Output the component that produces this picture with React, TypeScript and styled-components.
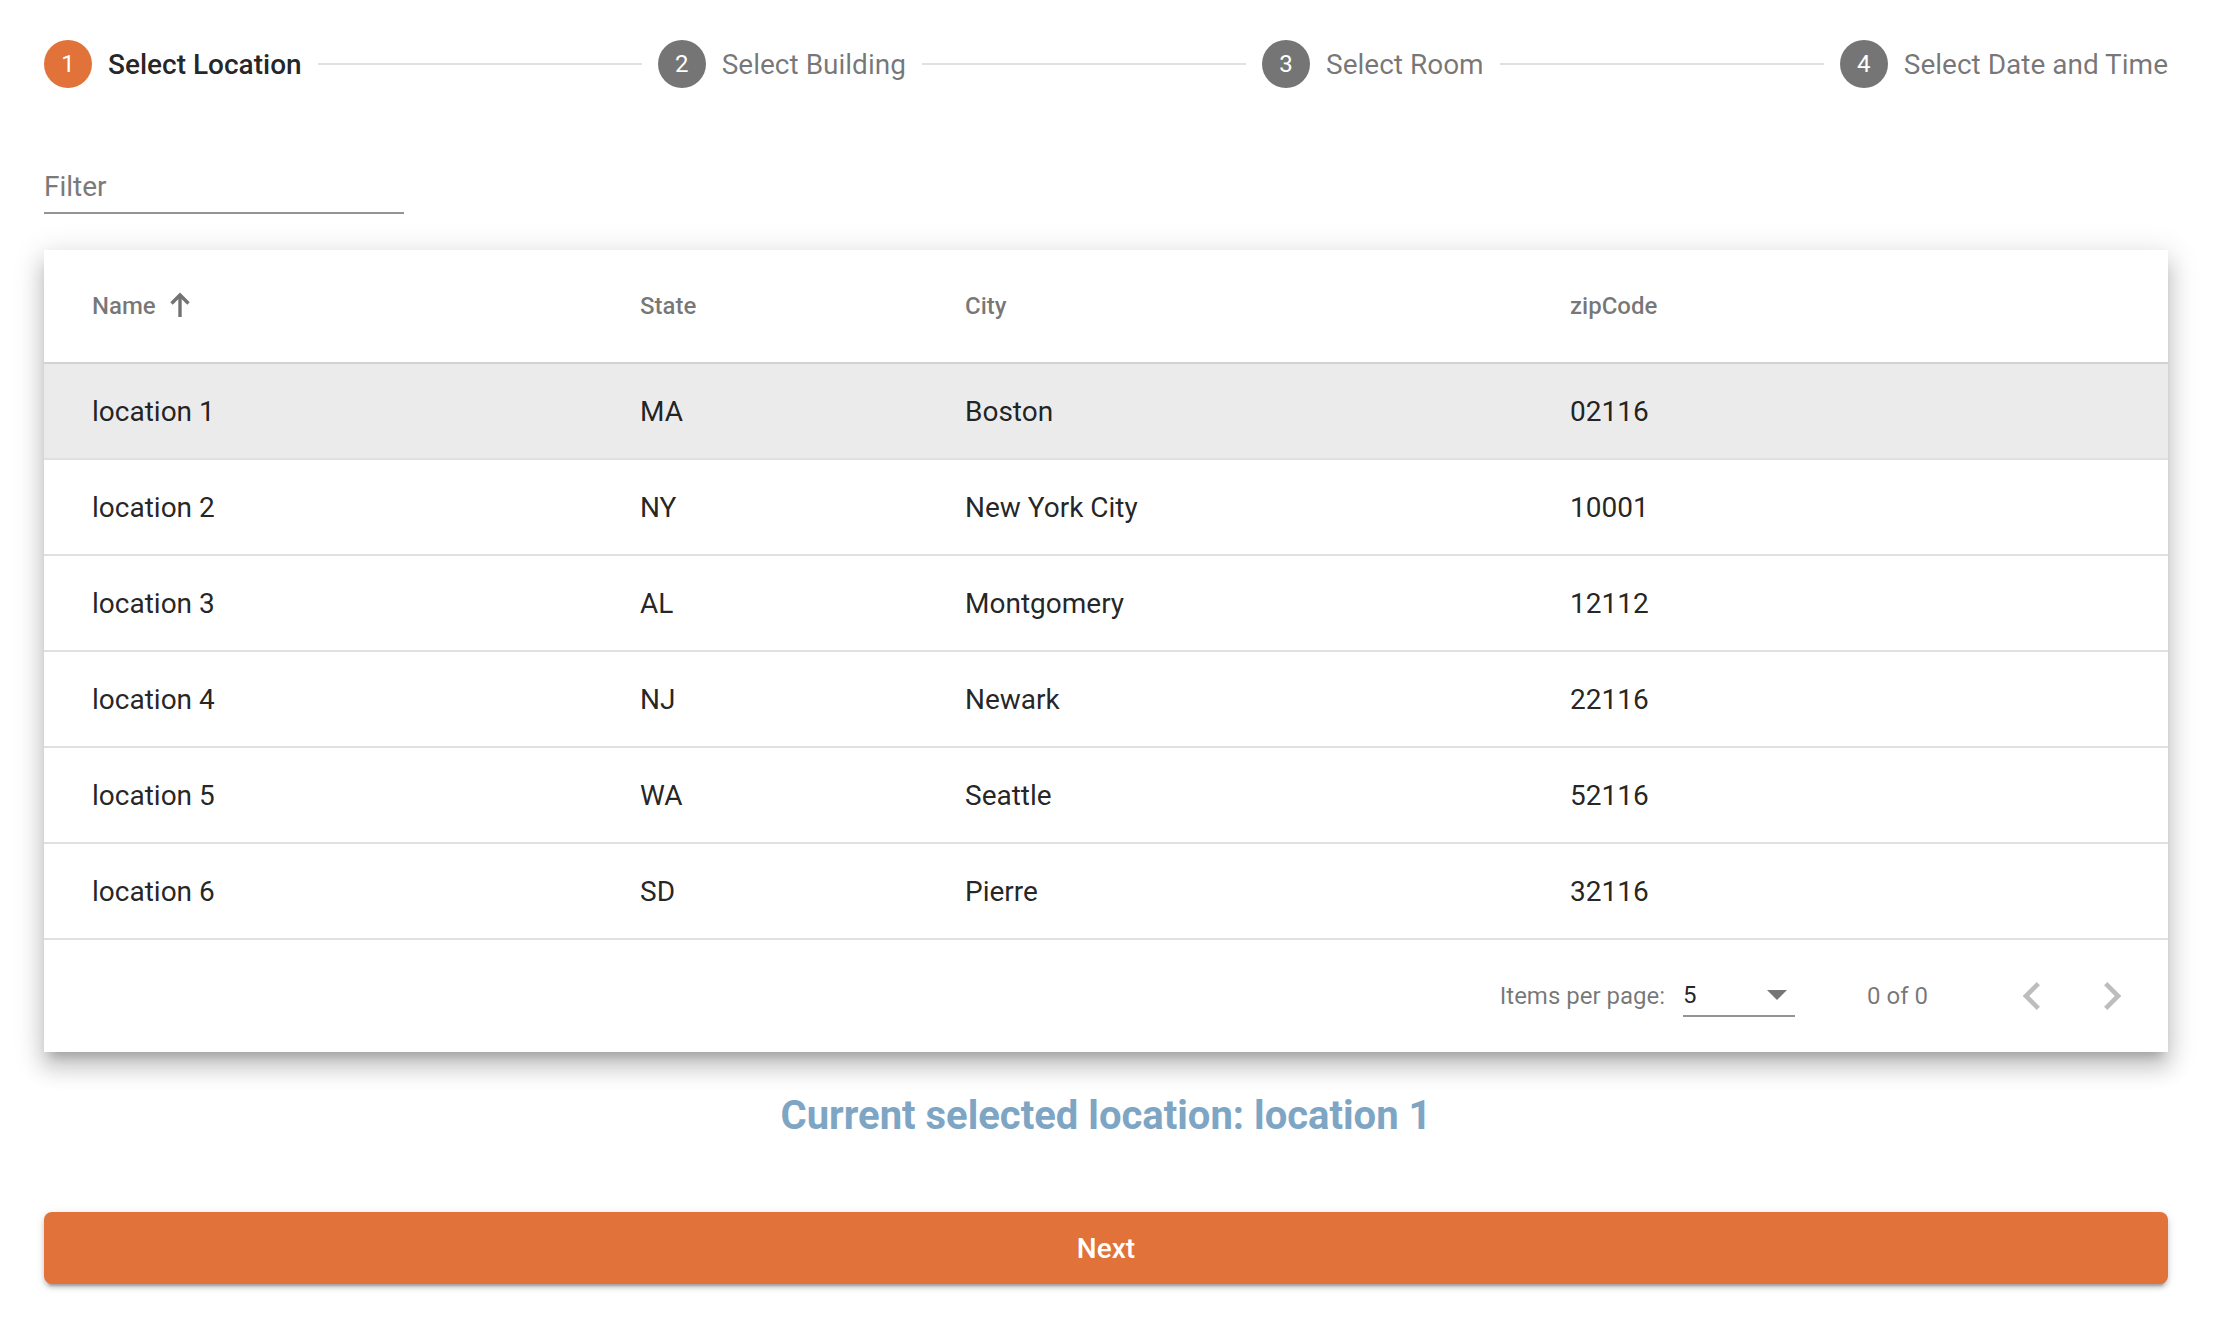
import * as React from 'react';
import styled, { createGlobalStyle } from 'styled-components';

const GlobalStyle = createGlobalStyle`
	body {
		margin: 0;
		background: #ffffff;
		font-family: Roboto, "Noto Sans", "Liberation Sans", sans-serif;
	}
`;

const Page = styled.div`
	padding: 40px 58px 40px 44px;
	display: flex;
	flex-direction: column;
`;

const Stepper = styled.div`
	display: flex;
	align-items: center;
	height: 48px;
`;

const Step = styled.div`
	display: flex;
	align-items: center;
	gap: 16px;
`;

const StepIcon = styled.div<{ $active?: boolean }>`
	width: 48px;
	height: 48px;
	border-radius: 50%;
	background: ${(p) => (p.$active ? '#e0723a' : '#757575')};
	color: #fff;
	font-size: 24px;
	display: flex;
	align-items: center;
	justify-content: center;
`;

const StepLabel = styled.span<{ $active?: boolean }>`
	font-size: 28px;
	font-weight: ${(p) => (p.$active ? 500 : 400)};
	color: ${(p) => (p.$active ? 'rgba(0, 0, 0, 0.87)' : 'rgba(0, 0, 0, 0.54)')};
	white-space: nowrap;
`;

const Connector = styled.div`
	flex: 1;
	height: 2px;
	margin: 0 16px;
	background: #e0e0e0;
`;

const FilterField = styled.div`
	margin-top: 78px;
	width: 360px;
	border-bottom: 2px solid #949494;
	height: 40px;
	padding-bottom: 6px;
	display: flex;
	align-items: center;
`;

const FilterInput = styled.input`
	border: none;
	outline: none;
	padding: 0;
	width: 100%;
	font-family: inherit;
	font-size: 28px;
	color: rgba(0, 0, 0, 0.87);
	background: transparent;

	&::placeholder {
		color: #7a7a7a;
	}
`;

const Card = styled.div`
	margin-top: 36px;
	background: #fff;
	box-shadow: 0 10px 10px -6px rgba(0, 0, 0, 0.2), 0 16px 20px 2px rgba(0, 0, 0, 0.14),
		0 6px 28px 4px rgba(0, 0, 0, 0.12);
`;

const Row = styled.div<{ $header?: boolean; $selected?: boolean }>`
	display: grid;
	grid-template-columns: 548px 325px 605px 1fr;
	align-items: center;
	padding: 0 48px;
	height: ${(p) => (p.$header ? '112px' : '94px')};
	border-bottom: 2px solid ${(p) => (p.$header ? '#d2d2d2' : '#e0e0e0')};
	background: ${(p) => (p.$selected ? '#ebebeb' : '#fff')};
`;

const HeadCell = styled.div`
	display: flex;
	align-items: center;
	gap: 10px;
	font-size: 24px;
	font-weight: 500;
	color: rgba(0, 0, 0, 0.54);
`;

const SortArrow = styled.svg`
	width: 28px;
	height: 28px;
	color: #737373;
	margin-top: -2px;
`;

const Cell = styled.div`
	font-size: 28px;
	color: rgba(0, 0, 0, 0.87);
`;

const Paginator = styled.div`
	display: flex;
	align-items: center;
	justify-content: flex-end;
	height: 112px;
	padding-right: 16px;
	font-size: 24px;
	color: rgba(0, 0, 0, 0.54);
`;

const PageSelect = styled.div`
	margin-left: 18px;
	width: 112px;
	height: 42px;
	box-sizing: border-box;
	border-bottom: 2px solid #949494;
	display: flex;
	align-items: center;
	justify-content: space-between;
	padding-right: 8px;
	color: rgba(0, 0, 0, 0.87);
`;

const Caret = styled.span`
	width: 0;
	height: 0;
	border-left: 10px solid transparent;
	border-right: 10px solid transparent;
	border-top: 10px solid rgba(0, 0, 0, 0.54);
`;

const RangeLabel = styled.span`
	margin: 0 64px 0 72px;
`;

const IconButton = styled.button`
	width: 80px;
	height: 80px;
	border: none;
	background: none;
	padding: 0;
	display: flex;
	align-items: center;
	justify-content: center;
	color: rgba(0, 0, 0, 0.26);
`;

const Summary = styled.h3`
	margin: 40px 0 0;
	line-height: 48px;
	text-align: center;
	font-size: 40px;
	font-weight: 700;
	color: #7ea6c4;
`;

const NextButton = styled.button`
	margin-top: 72px;
	height: 72px;
	border: none;
	border-radius: 8px;
	background: #e0723a;
	color: #fff;
	font-family: inherit;
	font-size: 28px;
	font-weight: 500;
	box-shadow: 0 6px 2px -4px rgba(0, 0, 0, 0.2), 0 4px 4px 0 rgba(0, 0, 0, 0.14),
		0 2px 10px 0 rgba(0, 0, 0, 0.12);
`;

const steps = ['Select Location', 'Select Building', 'Select Room', 'Select Date and Time'];

const locations = [
	{ name: 'location 1', state: 'MA', city: 'Boston', zip: '02116' },
	{ name: 'location 2', state: 'NY', city: 'New York City', zip: '10001' },
	{ name: 'location 3', state: 'AL', city: 'Montgomery', zip: '12112' },
	{ name: 'location 4', state: 'NJ', city: 'Newark', zip: '22116' },
	{ name: 'location 5', state: 'WA', city: 'Seattle', zip: '52116' },
	{ name: 'location 6', state: 'SD', city: 'Pierre', zip: '32116' },
];

const Chevron = ({ dir }: { dir: 'left' | 'right' }) => (
	<svg width="56" height="56" viewBox="0 0 24 24" fill="currentColor">
		{dir === 'left' ? (
			<path d="M15.41 7.41L14 6l-6 6 6 6 1.41-1.41L10.83 12z" />
		) : (
			<path d="M8.59 16.59L10 18l6-6-6-6-1.41 1.41L13.17 12z" />
		)}
	</svg>
);

const App = () => {
	const selected = 'location 1';

	return (
		<Page>
			<GlobalStyle />
			<Stepper>
				{steps.map((label, i) => (
					<React.Fragment key={label}>
						{i > 0 && <Connector />}
						<Step>
							<StepIcon $active={i === 0}>{i + 1}</StepIcon>
							<StepLabel $active={i === 0}>{label}</StepLabel>
						</Step>
					</React.Fragment>
				))}
			</Stepper>

			<FilterField>
				<FilterInput placeholder="Filter" />
			</FilterField>

			<Card>
				<Row $header>
					<HeadCell>
						Name
						<SortArrow viewBox="0 0 28 28" fill="none" stroke="currentColor" strokeWidth="3.4">
							<path d="M14 26V4" />
							<path d="M5.5 12.5L14 4l8.5 8.5" />
						</SortArrow>
					</HeadCell>
					<HeadCell>State</HeadCell>
					<HeadCell>City</HeadCell>
					<HeadCell>zipCode</HeadCell>
				</Row>
				{locations.map((loc) => (
					<Row key={loc.name} $selected={loc.name === selected}>
						<Cell>{loc.name}</Cell>
						<Cell>{loc.state}</Cell>
						<Cell>{loc.city}</Cell>
						<Cell>{loc.zip}</Cell>
					</Row>
				))}
				<Paginator>
					<span>Items per page:</span>
					<PageSelect>
						<span>5</span>
						<Caret />
					</PageSelect>
					<RangeLabel>0 of 0</RangeLabel>
					<IconButton>
						<Chevron dir="left" />
					</IconButton>
					<IconButton>
						<Chevron dir="right" />
					</IconButton>
				</Paginator>
			</Card>

			<Summary>Current selected location: {selected}</Summary>

			<NextButton>Next</NextButton>
		</Page>
	);
};

export default App;
